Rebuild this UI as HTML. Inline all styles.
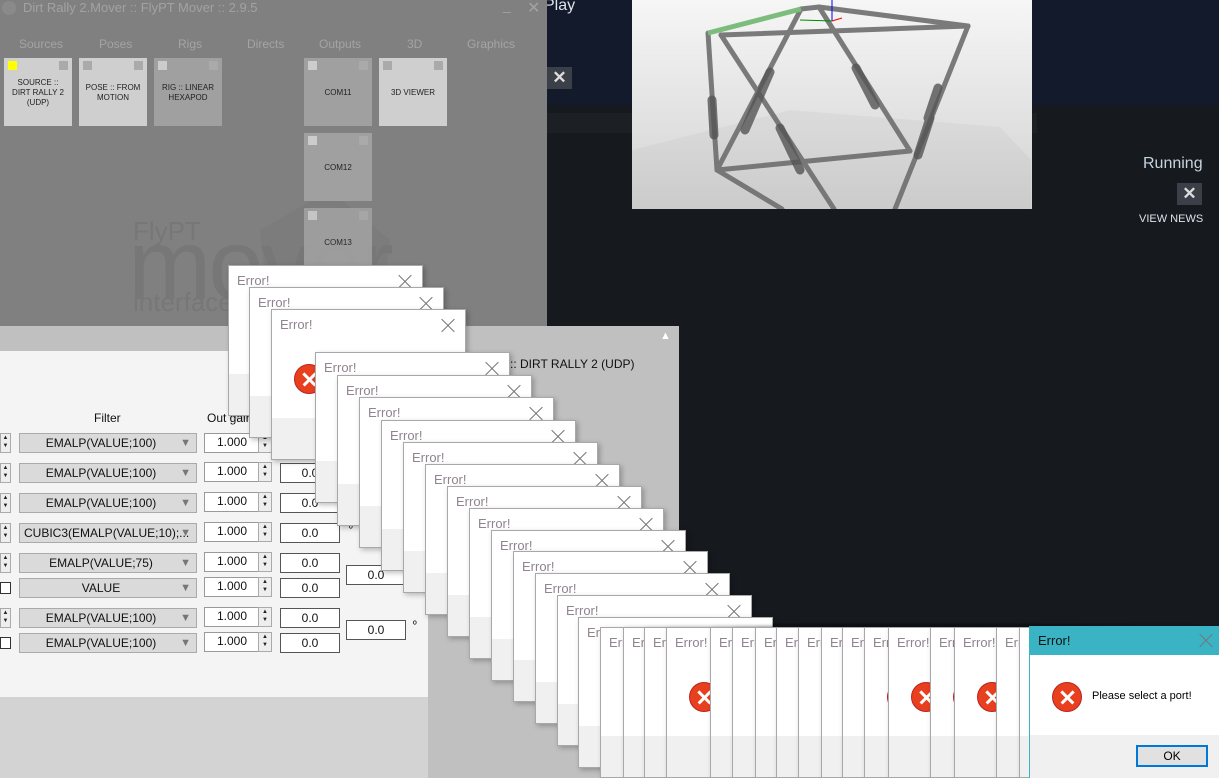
<!DOCTYPE html>
<html><head><meta charset="utf-8"><style>
*{margin:0;padding:0;box-sizing:border-box}
html,body{width:1219px;height:778px;overflow:hidden}
body{position:relative;background:#16191e;font-family:"Liberation Sans",sans-serif}
.a{position:absolute}
.tile{position:absolute;width:68px;height:68px;font-size:8px;color:#222;text-align:center;display:flex;align-items:center;justify-content:center;line-height:10px;padding-top:2px}
.tile:before,.tile:after{content:"";position:absolute;top:3px;width:9px;height:9px;background:#aaa}
.tile:before{left:4px}.tile:after{right:4px}
.tl:before{background:#ccc}
.y:before{background:#ff0}
.tab{position:absolute;top:37px;font-size:12px;color:#a4a4a4}
.dd{position:absolute;left:19px;width:178px;height:20px;background:#dadada;border:1px solid #aaa;font-size:12px;color:#111;text-align:center;line-height:18px;padding-right:14px}
.dd:after{content:"▼";position:absolute;right:5px;top:0;color:#777;font-size:11px}
.in{position:absolute;left:204px;width:55px;height:20px;background:#fff;border:1px solid #999;font-size:12px;line-height:17px;padding-left:12px;color:#111}
.sp{position:absolute;left:258px;width:14px;height:20px;background:#eee;border:1px solid #aaa;font-size:6px;line-height:8px;text-align:center;color:#222}
.sp0{left:0;width:11px}
.bx{position:absolute;width:60px;height:20px;background:#fff;border:1px solid #555;font-size:12px;line-height:18px;text-align:center;color:#111}
.cb{position:absolute;left:0;width:11px;height:12px;border:1px solid #333;background:#fff}
.d{position:absolute;width:195px;height:151px;background:#fff;border:1px solid #a8a8a8;box-shadow:2px 2px 5px rgba(0,0,0,.25);overflow:hidden}
.d .t{position:absolute;left:8px;top:7px;font-size:13px;color:#8f848f}
.x{position:absolute;right:10px;top:9px;width:14px;height:14px}
.x:before,.x:after{content:"";position:absolute;left:-2px;top:6px;width:18px;height:1px;background:#777;transform:rotate(45deg)}
.x:after{transform:rotate(-45deg)}
.d .f{position:absolute;left:0;right:0;top:108px;bottom:0;background:#f0f0f0}
.d .ic,.fin .ic{position:absolute;left:22px;top:54px;width:30px;height:30px;border-radius:50%;background:#e8401f;border:1px solid #b22}
.ic:before,.ic:after{content:"";position:absolute;left:6px;top:13px;width:17px;height:2.5px;background:#fff;transform:rotate(45deg)}
.ic:after{transform:rotate(-45deg)}
.b{height:151px;width:240px}
</style></head><body>
<div class="a" style="left:547px;top:0;width:672px;height:105px;background:#131a2b"></div>
<div class="a" style="left:547px;top:113px;width:490px;height:20px;background:#1c1f24"></div>
<div class="a" style="left:544px;top:-3px;font-size:16px;color:#dfe3ea">Play</div>
<div class="a" style="left:547px;top:67px;width:25px;height:22px;background:#3a3f48;color:#ddd;font-size:17px;text-align:center;line-height:22px;font-weight:bold">✕</div>
<div class="a" style="left:1143px;top:155px;font-size:16px;color:#c6d4df">Running</div>
<div class="a" style="left:1177px;top:183px;width:25px;height:22px;background:#3a3f48;color:#ddd;font-size:17px;text-align:center;line-height:22px;font-weight:bold">✕</div>
<div class="a" style="left:1139px;top:213px;font-size:11px;color:#dbe3ec">VIEW NEWS</div>
<svg class="a" style="left:632px;top:0" width="400" height="209" viewBox="632 0 400 209">
<defs><linearGradient id="g" x1="0" y1="0" x2="0" y2="1"><stop offset="0" stop-color="#f6f6f6"/><stop offset="1" stop-color="#d2d2d2"/></linearGradient></defs>
<rect x="632" y="0" width="400" height="209" fill="url(#g)"/>
<polygon points="632,150 790,110 1000,127 1031,160 1031,209 632,209" fill="#000" opacity=".03"/>
<g stroke="#6e6e6e" stroke-width="5" stroke-linecap="round" fill="none" opacity=".9">
<line x1="801" y1="9" x2="819" y2="7"/><line x1="819" y1="7" x2="968" y2="26"/><line x1="721" y1="35" x2="968" y2="26"/>
<line x1="708" y1="33" x2="717" y2="170"/><line x1="721" y1="35" x2="834" y2="209"/><line x1="801" y1="9" x2="717" y2="170"/>
<line x1="819" y1="7" x2="910" y2="151"/><line x1="968" y1="26" x2="895" y2="209"/><line x1="717" y1="170" x2="910" y2="151"/><line x1="717" y1="170" x2="782" y2="209"/>
</g>
<g stroke="#555" stroke-width="9" stroke-linecap="round" opacity=".8">
<line x1="712" y1="100" x2="714" y2="135"/><line x1="770" y1="72" x2="745" y2="130"/><line x1="856" y1="68" x2="875" y2="105"/><line x1="780" y1="128" x2="800" y2="170"/><line x1="938" y1="88" x2="928" y2="118"/><line x1="930" y1="118" x2="918" y2="155"/>
</g>
<line x1="708" y1="33" x2="801" y2="9" stroke="#7cbc7c" stroke-width="5"/>
<line x1="832" y1="0" x2="832" y2="21" stroke="#00f" stroke-width="1"/><line x1="800" y1="20" x2="832" y2="21" stroke="#080" stroke-width="1"/><line x1="832" y1="21" x2="842" y2="18" stroke="#e00" stroke-width="1"/>
</svg>
<div class="a" style="left:0;top:0;width:547px;height:326px;background:#808080;overflow:hidden">
<div class="a" style="left:2px;top:1px;width:14px;height:14px;border-radius:50%;background:#8a8a8a"></div>
<div class="a" style="left:23px;top:0;font-size:13px;color:#a2a2a2">Dirt Rally 2.Mover :: FlyPT Mover :: 2.9.5</div>
<div class="a" style="left:503px;top:-3px;font-size:14px;color:#a2a2a2">_</div>
<div class="a" style="left:527px;top:-2px;font-size:16px;color:#a2a2a2;font-family:'DejaVu Sans'">✕</div>
<div class="tab" style="left:19px">Sources</div><div class="tab" style="left:99px">Poses</div><div class="tab" style="left:178px">Rigs</div><div class="tab" style="left:247px">Directs</div><div class="tab" style="left:319px">Outputs</div><div class="tab" style="left:407px">3D</div><div class="tab" style="left:467px">Graphics</div>
<svg class="a" style="left:240px;top:180px" width="160" height="146"><polygon points="20,50 90,10 150,60 140,146 30,146" fill="#7a7a7a" opacity=".6"/></svg>
<div class="a" style="left:133px;top:216px;font-size:26px;color:#777;line-height:30px">FlyPT</div>
<div class="a" style="left:128px;top:215px;font-size:100px;color:#777;letter-spacing:-3px;line-height:100px">mover</div>
<div class="a" style="left:133px;top:287px;font-size:26px;color:#777;line-height:30px">interface</div>
<div class="tile y" style="left:4px;top:58px;background:#cfcfcf">SOURCE ::<br>DIRT RALLY 2<br>(UDP)</div>
<div class="tile" style="left:79px;top:58px;background:#cfcfcf">POSE :: FROM<br>MOTION</div>
<div class="tile tl" style="left:154px;top:58px;background:#a0a0a0">RIG :: LINEAR<br>HEXAPOD</div>
<div class="tile tl" style="left:304px;top:58px;background:#a0a0a0">COM11</div>
<div class="tile" style="left:379px;top:58px;background:#cfcfcf">3D VIEWER</div>
<div class="tile tl" style="left:304px;top:133px;background:#a0a0a0">COM12</div>
<div class="tile tl" style="left:304px;top:208px;background:#a0a0a0;opacity:.92">COM13</div>
</div>
<div class="a" style="left:0;top:326px;width:679px;height:452px;background:#c0c0c0"></div>
<div class="a" style="left:0;top:351px;width:428px;height:346px;background:#f4f4f4"></div>
<div class="a" style="left:0;top:697px;width:428px;height:81px;background:#d3d3d3"></div>
<div class="a" style="left:660px;top:330px;font-size:11px;color:#fff">▲</div>
<div class="a" style="left:510px;top:357px;font-size:12px;color:#111">:: DIRT RALLY 2 (UDP)</div>
<div class="a" style="left:94px;top:411px;font-size:12px;color:#111">Filter</div>
<div class="a" style="left:207px;top:411px;font-size:12px;color:#111">Out gain</div>
<div class="sp sp0" style="top:433px">▲<br>▼</div><div class="dd" style="top:433px">EMALP(VALUE;100)</div><div class="in" style="top:433px">1.000</div><div class="sp" style="top:433px">▲<br>▼</div>
<div class="sp sp0" style="top:463px">▲<br>▼</div><div class="dd" style="top:463px">EMALP(VALUE;100)</div><div class="in" style="top:462px">1.000</div><div class="sp" style="top:462px">▲<br>▼</div><div class="bx" style="left:280px;top:463px">0.0</div>
<div class="sp sp0" style="top:493px">▲<br>▼</div><div class="dd" style="top:493px">EMALP(VALUE;100)</div><div class="in" style="top:492px">1.000</div><div class="sp" style="top:492px">▲<br>▼</div><div class="bx" style="left:280px;top:493px">0.0</div>
<div class="sp sp0" style="top:523px">▲<br>▼</div><div class="dd" style="top:523px;padding-left:4px;text-align:left">CUBIC3(EMALP(VALUE;10);...</div><div class="in" style="top:522px">1.000</div><div class="sp" style="top:522px">▲<br>▼</div><div class="bx" style="left:280px;top:523px">0.0</div><div class="a" style="left:349px;top:524px;font-size:10px">º</div>
<div class="sp sp0" style="top:553px">▲<br>▼</div><div class="dd" style="top:553px">EMALP(VALUE;75)</div><div class="in" style="top:552px">1.000</div><div class="sp" style="top:552px">▲<br>▼</div><div class="bx" style="left:280px;top:553px">0.0</div>
<div class="cb" style="top:582px"></div><div class="dd" style="top:578px">VALUE</div><div class="in" style="top:577px">1.000</div><div class="sp" style="top:577px">▲<br>▼</div><div class="bx" style="left:280px;top:578px">0.0</div>
<div class="bx" style="left:346px;top:565px">0.0</div>
<div class="sp sp0" style="top:608px">▲<br>▼</div><div class="dd" style="top:608px">EMALP(VALUE;100)</div><div class="in" style="top:607px">1.000</div><div class="sp" style="top:607px">▲<br>▼</div><div class="bx" style="left:280px;top:608px">0.0</div>
<div class="cb" style="top:637px"></div><div class="dd" style="top:633px">EMALP(VALUE;100)</div><div class="in" style="top:632px">1.000</div><div class="sp" style="top:632px">▲<br>▼</div><div class="bx" style="left:280px;top:633px">0.0</div>
<div class="bx" style="left:346px;top:620px">0.0</div><div class="a" style="left:413px;top:620px;font-size:10px">º</div>
<div class="d" style="left:228px;top:265px"><span class="t">Error!</span><span class="x"></span><b class="ic"></b><div class="f"></div></div>
<div class="d" style="left:249px;top:287px"><span class="t">Error!</span><span class="x"></span><b class="ic"></b><div class="f"></div></div>
<div class="d" style="left:271px;top:309px"><span class="t">Error!</span><span class="x"></span><div class="f"></div><b class="ic"></b></div>
<div class="d" style="left:315px;top:352px"><span class="t">Error!</span><span class="x"></span><div class="f"></div><b class="ic"></b></div>
<div class="d" style="left:337px;top:375px"><span class="t">Error!</span><span class="x"></span><div class="f"></div><b class="ic"></b></div>
<div class="d" style="left:359px;top:397px"><span class="t">Error!</span><span class="x"></span><div class="f"></div><b class="ic"></b></div>
<div class="d" style="left:381px;top:420px"><span class="t">Error!</span><span class="x"></span><div class="f"></div><b class="ic"></b></div>
<div class="d" style="left:403px;top:442px"><span class="t">Error!</span><span class="x"></span><div class="f"></div><b class="ic"></b></div>
<div class="d" style="left:425px;top:464px"><span class="t">Error!</span><span class="x"></span><div class="f"></div><b class="ic"></b></div>
<div class="d" style="left:447px;top:486px"><span class="t">Error!</span><span class="x"></span><div class="f"></div><b class="ic"></b></div>
<div class="d" style="left:469px;top:508px"><span class="t">Error!</span><span class="x"></span><div class="f"></div><b class="ic"></b></div>
<div class="d" style="left:491px;top:530px"><span class="t">Error!</span><span class="x"></span><div class="f"></div><b class="ic"></b></div>
<div class="d" style="left:513px;top:551px"><span class="t">Error!</span><span class="x"></span><div class="f"></div><b class="ic"></b></div>
<div class="d" style="left:535px;top:573px"><span class="t">Error!</span><span class="x"></span><div class="f"></div><b class="ic"></b></div>
<div class="d" style="left:557px;top:595px"><span class="t">Error!</span><span class="x"></span><div class="f"></div><b class="ic"></b></div>
<div class="d" style="left:578px;top:617px"><span class="t">Error!</span><span class="x"></span><div class="f"></div><b class="ic"></b></div>
<div class="d b" style="left:600px;top:627px"><span class="t">Error!</span><div class="f"></div><b class="ic"></b></div>
<div class="d b" style="left:623px;top:627px"><span class="t">Error!</span><div class="f"></div><b class="ic"></b></div>
<div class="d b" style="left:644px;top:627px"><span class="t">Error!</span><div class="f"></div><b class="ic"></b></div>
<div class="d b" style="left:666px;top:627px"><span class="t">Error!</span><div class="f"></div><b class="ic"></b></div>
<div class="d b" style="left:710px;top:627px"><span class="t">Error!</span><div class="f"></div><b class="ic"></b></div>
<div class="d b" style="left:732px;top:627px"><span class="t">Error!</span><div class="f"></div><b class="ic"></b></div>
<div class="d b" style="left:755px;top:627px"><span class="t">Error!</span><div class="f"></div><b class="ic"></b></div>
<div class="d b" style="left:776px;top:627px"><span class="t">Error!</span><div class="f"></div><b class="ic"></b></div>
<div class="d b" style="left:798px;top:627px"><span class="t">Error!</span><div class="f"></div><b class="ic"></b></div>
<div class="d b" style="left:821px;top:627px"><span class="t">Error!</span><div class="f"></div><b class="ic"></b></div>
<div class="d b" style="left:842px;top:627px"><span class="t">Error!</span><div class="f"></div><b class="ic"></b></div>
<div class="d b" style="left:864px;top:627px"><span class="t">Error!</span><div class="f"></div><b class="ic"></b></div>
<div class="d b" style="left:888px;top:627px"><span class="t">Error!</span><div class="f"></div><b class="ic"></b></div>
<div class="d b" style="left:930px;top:627px"><span class="t">Error!</span><div class="f"></div><b class="ic"></b></div>
<div class="d b" style="left:954px;top:627px"><span class="t">Error!</span><div class="f"></div><b class="ic"></b></div>
<div class="d b" style="left:996px;top:627px"><span class="t">Error!</span><div class="f"></div><b class="ic"></b></div>
<div class="d b" style="left:1019px;top:627px"><span class="t">Error!</span><div class="f"></div><b class="ic"></b></div>
<div class="a fin" style="left:1029px;top:626px;width:190px;height:152px;background:#fff;border-left:1px solid #3ab3c5">
<div class="a" style="left:0;top:0;width:190px;height:29px;background:#3ab3c5"></div>
<div class="a" style="left:8px;top:7px;font-size:13px;color:#111">Error!</div>
<span class="x" style="right:6px;top:8px"></span>
<div class="a" style="left:0;top:109px;width:190px;height:43px;background:#f0f0f0"></div>
<b class="ic" style="top:56px"></b>
<div class="a" style="left:62px;top:64px;font-size:11px;color:#000">Please select a port!</div>
<div class="a" style="left:106px;top:119px;width:72px;height:22px;background:#e1e1e1;border:2px solid #0078d7;font-size:12px;text-align:center;line-height:18px;color:#000">OK</div>
</div>
</body></html>
